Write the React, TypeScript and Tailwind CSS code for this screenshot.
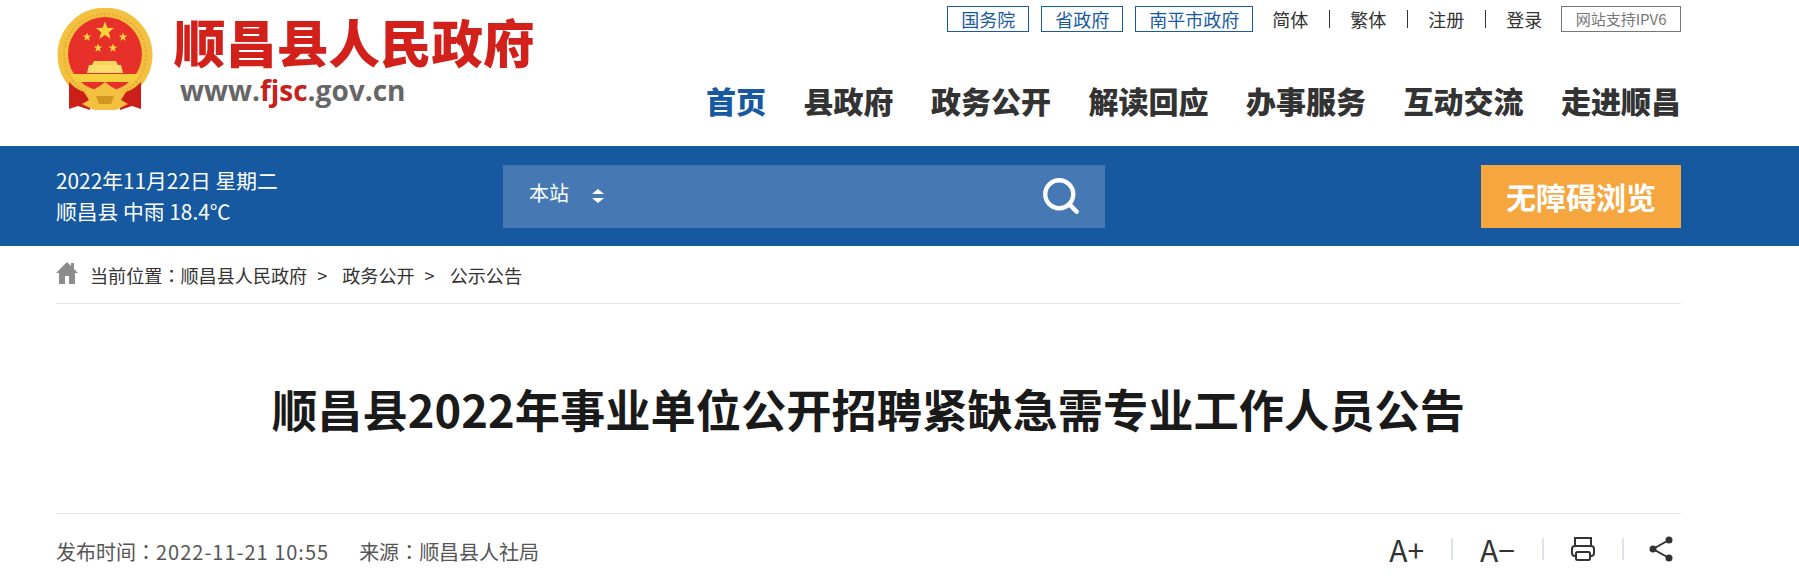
import { Search } from 'lucide-react'

const navItems = ['县政府', '政务公开', '解读回应', '办事服务', '互动交流', '走进顺昌']

function Star({ x, y, r }: { x: number; y: number; r: number }) {
  const points = Array.from({ length: 10 }, (_, i) => {
    const a = -Math.PI / 2 + (i * Math.PI) / 5
    const d = i % 2 === 0 ? r : r * 0.42
    return `${x + d * Math.cos(a)},${y + d * Math.sin(a)}`
  }).join(' ')
  return <polygon points={points} fill="#f7d43c" />
}

function Emblem() {
  return (
    <svg width="98" height="104" viewBox="0 0 98 104" className="shrink-0">
      <circle cx="49" cy="47" r="47.5" fill="#f3c03f" />
      <circle cx="49" cy="47" r="41" fill="none" stroke="#e6ae35" strokeWidth="2" strokeDasharray="2 2" />
      <circle cx="49" cy="46" r="37" fill="#e8302a" />
      <Star x={49} y={23} r={9.5} />
      <Star x={31} y={29} r={4.5} />
      <Star x={67} y={29} r={4.5} />
      <Star x={42} y={40} r={4.5} />
      <Star x={57} y={40} r={4.5} />
      <path d="M38 53 H60 L62 57 H36 Z" fill="#f6d65e" />
      <path d="M33 57 H65 L67 65 H31 Z" fill="#f8df6c" />
      <path d="M14 66 H84 L78 74 H20 Z" fill="#f6cf3e" />
      <path d="M13 74 Q22 84 36 86 L34 102 L22 98 L13 101 Z" fill="#cb1f1a" />
      <path d="M85 74 Q76 84 62 86 L64 102 L76 98 L85 101 Z" fill="#cb1f1a" />
      <path d="M28 84 Q40 82 49 74 Q58 82 70 84 L65 92 L72 96 L60 102 H38 L26 96 L33 92 Z" fill="#f3c03f" />
      <path d="M40 88 H58 L55 96 H43 Z" fill="#d2971f" />
    </svg>
  )
}

function Sep() {
  return <span className="mx-[20.5px] h-[18px] w-[1px] bg-[#333]" />
}

function HeaderTop() {
  return (
    <div className="flex h-[26px] items-center justify-end text-[18px] leading-[26px] text-[#333]">
      {['国务院', '省政府', '南平市政府'].map((name) => (
        <a key={name} className="mr-3 border border-[#1a5aa0] px-[13px] text-[18px] leading-[24px] text-[#1a5aa0]">
          {name}
        </a>
      ))}
      <a className="ml-[7px]">简体</a>
      <Sep />
      <a>繁体</a>
      <Sep />
      <a>注册</a>
      <Sep />
      <a>登录</a>
      <span className="ml-[19px] border border-[#777] px-[13.5px] text-[15px] leading-[24px] text-[#777]">网站支持IPV6</span>
    </div>
  )
}

function Nav() {
  return (
    <nav className="mt-[48px] flex items-center justify-end gap-[37.5px] text-[30px] leading-[40px] font-black text-[#333]">
      <a className="text-[#1659a1]">首页</a>
      {navItems.map((item) => (
        <a key={item}>{item}</a>
      ))}
    </nav>
  )
}

function Colon() {
  return <span className='[font-family:"Noto_Sans_CJK_TC",sans-serif]'>：</span>
}

export default function App() {
  return (
    <div className='h-[586px] overflow-hidden bg-white [font-family:"Noto_Sans_CJK_SC",sans-serif]'>
      <header className="ml-[56px] flex h-[146px] w-[1625px]">
        <div className="flex pt-[8px]">
          <Emblem />
          <div className="ml-[20px]">
            <div className="mt-[4px] text-[51.5px] leading-[58px] font-black whitespace-nowrap text-[#d2201b]">
              顺昌县人民政府
            </div>
            <div className='mt-[5px] ml-[6px] [font-family:"Open_Sans",sans-serif] text-[28px] leading-[30px] font-bold text-[#666]'>
              www.<span className="text-[#c8201a]">fjsc</span>.gov.cn
            </div>
          </div>
        </div>
        <div className="ml-auto pt-[6px]">
          <HeaderTop />
          <Nav />
        </div>
      </header>

      <div className="h-[100px] bg-[#1659a1]">
        <div className="ml-[56px] flex h-full w-[1625px] items-center text-white">
          <div className="w-[447px] text-[20.8px] leading-[31px]">
            <p>2022年11月22日 星期二</p>
            <p>顺昌县 中雨 18.4℃</p>
          </div>
          <div className="flex h-[63px] w-[602px] items-center bg-[#4679b4] pr-[23px] pl-[26px]">
            <span className="-mt-[6px] text-[20px]">本站</span>
            <span className="ml-[23px] flex flex-col gap-[4px]">
              <span className="h-0 w-0 border-x-[6px] border-b-[5px] border-x-transparent border-b-white" />
              <span className="h-0 w-0 border-x-[6px] border-t-[5px] border-x-transparent border-t-white" />
            </span>
            <Search className="ml-auto" size={42} strokeWidth={2.5} />
          </div>
          <button className="ml-auto h-[63px] w-[200px] bg-[#f5a63f] text-[30px] font-bold text-white">无障碍浏览</button>
        </div>
      </div>

      <div className="ml-[56px] w-[1625px]">
        <div className="flex h-[58px] items-center border-b border-[#e5e5e5] pt-[2px] text-[18.1px] text-[#333]">
          <svg width="22" height="22" viewBox="0 0 22 22" className="-mt-[6px] mr-[12px]">
            <path d="M11 0 L15 4 V1 H18 V7 L22 11 H19 V22 H13 V14 H9 V22 H3 V11 H0 Z" fill="#8c8c8c" />
          </svg>
          <span>
            当前位置
            <Colon />
            顺昌县人民政府
          </span>
          <span className="mr-[15px] ml-[10px]">&gt;</span>
          <span>政务公开</span>
          <span className="mr-[15px] ml-[10px]">&gt;</span>
          <span>公示公告</span>
        </div>

        <h1 className="flex h-[210px] items-center justify-center border-b border-[#e5e5e5] text-[45.25px] font-bold text-[#1a1a1a]">
          顺昌县2022年事业单位公开招聘紧缺急需专业工作人员公告
        </h1>

        <div className="flex h-[70px] items-center text-[20px] text-[#555]">
          <span className="mt-[6px]">
            发布时间
            <Colon />
            <span className="tracking-[1px]">2022-11-21 10:55</span>
          </span>
          <span className="mt-[6px] ml-[30px]">
            来源
            <Colon />
            顺昌县人社局
          </span>
          <div className="mr-[8px] ml-auto flex items-center text-[#333]">
            <span className="text-[30px] leading-none">A+</span>
            <span className="mx-[27px] h-[22px] w-[2px] bg-[#dde3ea]" />
            <span className="text-[30px] leading-none">A−</span>
            <span className="mx-[27px] h-[22px] w-[2px] bg-[#dde3ea]" />
            <svg width="24" height="26" viewBox="0 0 24 26" fill="none" stroke="#333" strokeWidth="2">
              <path d="M4 10V2H20V10" />
              <rect x="1" y="10" width="22" height="10" rx="3" />
              <rect x="5" y="16" width="14" height="8" rx="1.5" fill="#fff" />
            </svg>
            <span className="mr-[25px] ml-[27px] h-[22px] w-[2px] bg-[#dde3ea]" />
            <svg width="24" height="26" viewBox="0 0 24 26" fill="#333" stroke="#333" strokeWidth="2">
              <circle cx="20" cy="4" r="2.5" />
              <circle cx="4" cy="13" r="2.5" />
              <circle cx="20" cy="22" r="2.5" />
              <path d="M20 4L4 13L20 22" fill="none" />
            </svg>
          </div>
        </div>
      </div>
    </div>
  )
}
